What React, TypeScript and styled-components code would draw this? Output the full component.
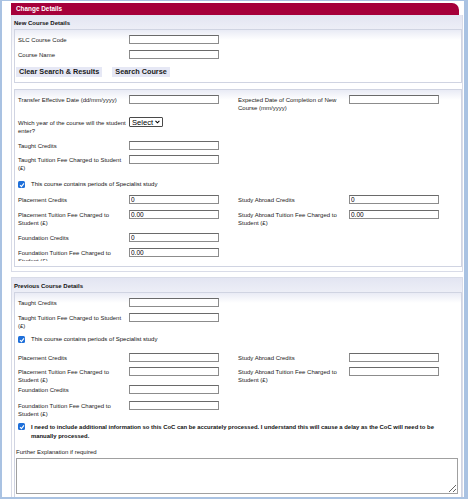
import React from "react";
import styled, { createGlobalStyle } from "styled-components";

const GlobalStyle = createGlobalStyle`
  html, body { margin: 0; padding: 0; background: #fff; }
  body { font-family: "Liberation Sans", Arial, sans-serif; color: #222; }
`;

const Frame = styled.div`
  box-sizing: border-box;
  width: 468px;
  height: 499px;
  overflow: hidden;
  border-style: solid;
  border-color: #a9c2e2;
  border-width: 1px 4px 2px 2px;
  padding: 2px 1px 0 9px;
  background: #fff;
`;

const Header = styled.div`
  height: 12px;
  margin-right: 4px;
  padding-left: 5px;
  background: #a6003a;
  color: #fff;
  font-weight: bold;
  font-size: 6.4px;
  line-height: 12px;
  border-top-right-radius: 7px;
`;

const Panel = styled.section<{ $first?: boolean }>`
  border: 1px solid #d9dce8;
  border-top: ${(p) => (p.$first ? "none" : "1px solid #d9dce8")};
  margin-top: ${(p) => (p.$first ? 0 : 5)}px;
  padding: 0 0 4px 2px;
  background: linear-gradient(#e3e5f2, #fff 40px);
`;

const Heading = styled.div`
  font-weight: bold;
  font-size: 6px;
  line-height: 8px;
  padding: 4px 0 2px;
  color: #111;
`;

const Box = styled.div`
  border: 1px solid #d0d4e2;
  background: linear-gradient(#e9ebf5, #fff 10px);
  padding: 5px 3px;
  & + & { margin-top: 6px; }
`;

const Row = styled.div<{ $h: number; $clip?: boolean }>`
  display: flex;
  align-items: flex-start;
  gap: 19px;
  height: ${(p) => p.$h}px;
  overflow: ${(p) => (p.$clip ? "hidden" : "visible")};
`;

const Field = styled.div`
  display: flex;
  align-items: flex-start;
`;

const Label = styled.div`
  box-sizing: border-box;
  width: 111px;
  padding: 1px 1px 0 0;
  font-size: 6px;
  line-height: 8px;
  color: #222;
`;

const Input = styled.input`
  box-sizing: border-box;
  width: 90px;
  height: 9px;
  margin: 0;
  padding: 0 1px;
  border: 1px solid #8c8c8c;
  border-top-color: #6a6a6a;
  background: #fff;
  font: 6.5px "Liberation Sans", Arial, sans-serif;
  color: #000;
  outline: none;
`;

const SelectBox = styled.div`
  box-sizing: border-box;
  display: inline-flex;
  align-items: center;
  gap: 2px;
  width: 34px;
  height: 10px;
  margin-top: -1px;
  padding: 0 2px;
  border: 1px solid #4a4a4a;
  border-radius: 1px;
  background: #fff;
  font-size: 7.6px;
  color: #000;
`;

const ButtonRow = styled.div`
  display: flex;
  gap: 10px;
  margin-left: -2px;
`;

const Button = styled.button`
  height: 10px;
  margin: 0;
  padding: 0 3px;
  border: none;
  background: #e6e8f5;
  font: bold 7.3px/10px "Liberation Sans", Arial, sans-serif;
  color: #1a1a1a;
`;

const CheckRow = styled.div<{ $h: number }>`
  display: flex;
  align-items: flex-start;
  gap: 6px;
  height: ${(p) => p.$h}px;
`;

const Check = styled.span`
  flex: none;
  display: flex;
  align-items: center;
  justify-content: center;
  width: 7px;
  height: 7px;
  background: #1e6fd9;
  border-radius: 1.5px;
`;

const CheckText = styled.div<{ $bold?: boolean }>`
  font-size: ${(p) => (p.$bold ? 5.9 : 6)}px;
  font-weight: ${(p) => (p.$bold ? "bold" : "normal")};
  line-height: ${(p) => (p.$bold ? 9 : 8)}px;
  margin-top: ${(p) => (p.$bold ? 0 : -1)}px;
  max-width: 420px;
  color: #111;
`;

const NoteLabel = styled.div`
  height: 10px;
  margin-left: -2px;
  font-size: 6px;
  line-height: 8px;
  color: #222;
`;

const TextArea = styled.textarea`
  display: block;
  box-sizing: border-box;
  width: 442px;
  height: 36px;
  margin: 0 0 0 -2px;
  border: 1px solid #a0a0a0;
  background: #fff;
  resize: both;
  outline: none;
`;

const Tick = () => (
  <svg width="6" height="6" viewBox="0 0 6 6">
    <path d="M1 3.2 L2.4 4.6 L5 1.4" fill="none" stroke="#fff" strokeWidth="1.1" />
  </svg>
);

const Chevron = () => (
  <svg width="6" height="4" viewBox="0 0 6 4">
    <path d="M0.6 0.6 L3 3 L5.4 0.6" fill="none" stroke="#000" strokeWidth="1.3" />
  </svg>
);

type FieldProps = { label: string; value?: string };

const TextField = ({ label, value = "" }: FieldProps) => (
  <Field>
    <Label>{label}</Label>
    <Input defaultValue={value} />
  </Field>
);

const CheckLine = ({ h, bold, children }: { h: number; bold?: boolean; children: React.ReactNode }) => (
  <CheckRow $h={h}>
    <Check>
      <Tick />
    </Check>
    <CheckText $bold={bold}>{children}</CheckText>
  </CheckRow>
);

export default function App() {
  return (
    <>
      <GlobalStyle />
      <Frame>
        <Header>Change Details</Header>

        <Panel $first>
          <Heading>New Course Details</Heading>
          <Box>
            <Row $h={15}>
              <TextField label="SLC Course Code" />
            </Row>
            <Row $h={17}>
              <TextField label="Course Name" />
            </Row>
            <ButtonRow>
              <Button>Clear Search &amp; Results</Button>
              <Button>Search Course</Button>
            </ButtonRow>
          </Box>

          <Box>
            <Row $h={23}>
              <TextField label="Transfer Effective Date (dd/mm/yyyy)" />
              <TextField label="Expected Date of Completion of New Course (mm/yyyy)" />
            </Row>
            <Row $h={23}>
              <Field>
                <Label>Which year of the course will the student enter?</Label>
                <SelectBox>
                  Select
                  <Chevron />
                </SelectBox>
              </Field>
            </Row>
            <Row $h={14}>
              <TextField label="Taught Credits" />
            </Row>
            <Row $h={26}>
              <TextField label="Taught Tuition Fee Charged to Student (£)" />
            </Row>
            <CheckLine h={14}>This course contains periods of Specialist study</CheckLine>
            <Row $h={15}>
              <TextField label="Placement Credits" value="0" />
              <TextField label="Study Abroad Credits" value="0" />
            </Row>
            <Row $h={23}>
              <TextField label="Placement Tuition Fee Charged to Student (£)" value="0.00" />
              <TextField label="Study Abroad Tuition Fee Charged to Student (£)" value="0.00" />
            </Row>
            <Row $h={15}>
              <TextField label="Foundation Credits" value="0" />
            </Row>
            <Row $h={13} $clip>
              <TextField label="Foundation Tuition Fee Charged to Student (£)" value="0.00" />
            </Row>
          </Box>
        </Panel>

        <Panel>
          <Heading>Previous Course Details</Heading>
          <Box>
            <Row $h={15}>
              <TextField label="Taught Credits" />
            </Row>
            <Row $h={23}>
              <TextField label="Taught Tuition Fee Charged to Student (£)" />
            </Row>
            <CheckLine h={17}>This course contains periods of Specialist study</CheckLine>
            <Row $h={14}>
              <TextField label="Placement Credits" />
              <TextField label="Study Abroad Credits" />
            </Row>
            <Row $h={18}>
              <TextField label="Placement Tuition Fee Charged to Student (£)" />
              <TextField label="Study Abroad Tuition Fee Charged to Student (£)" />
            </Row>
            <Row $h={16}>
              <TextField label="Foundation Credits" />
            </Row>
            <Row $h={22}>
              <TextField label="Foundation Tuition Fee Charged to Student (£)" />
            </Row>
            <CheckLine h={25} bold>
              I need to include additional information so this CoC can be accurately processed. I
              understand this will cause a delay as the CoC will need to be manually processed.
            </CheckLine>
            <NoteLabel>Further Explanation if required</NoteLabel>
            <TextArea />
          </Box>
        </Panel>
      </Frame>
    </>
  );
}
